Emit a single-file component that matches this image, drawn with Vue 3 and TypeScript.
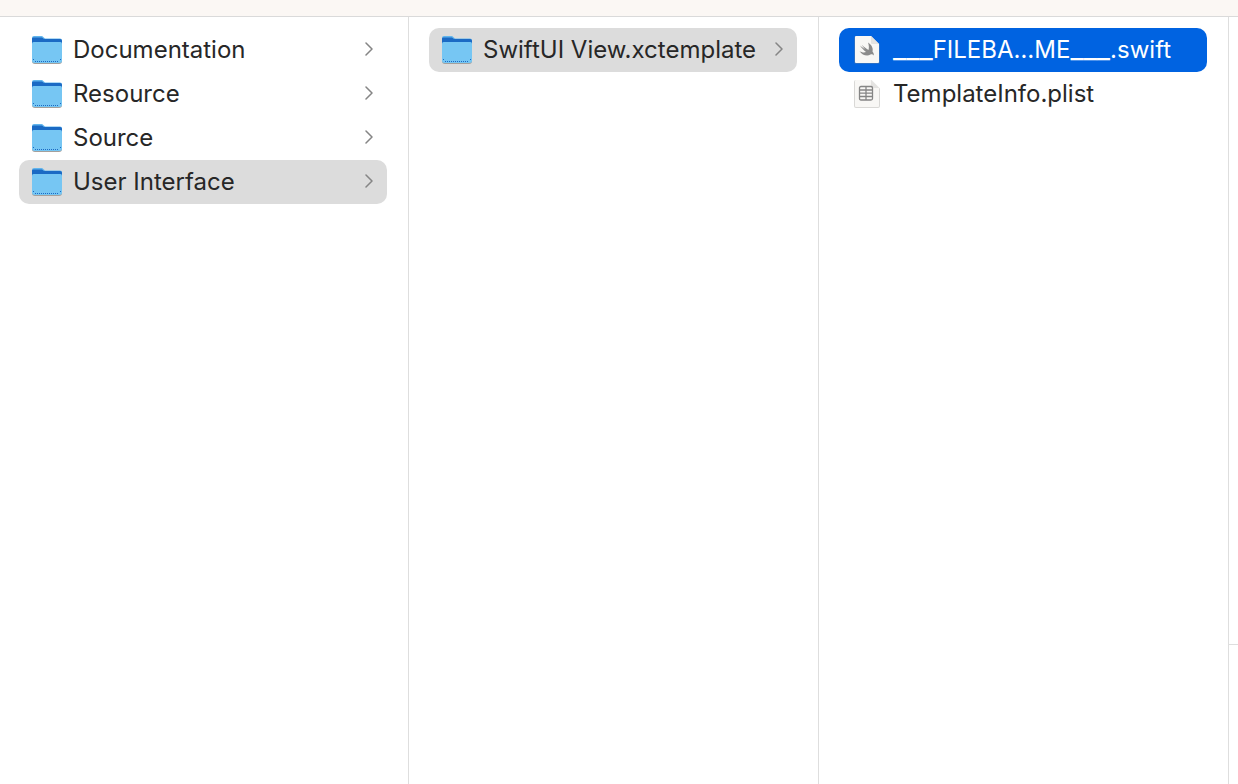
<script setup lang="ts">
import { ref } from 'vue'

type Kind = 'folder' | 'swift' | 'plist'

interface Entry {
  name: string
  kind: Kind
}

interface Column {
  label: string
  entries: Entry[]
}

const columns: Column[] = [
  {
    label: 'Templates',
    entries: [
      { name: 'Documentation', kind: 'folder' },
      { name: 'Resource', kind: 'folder' },
      { name: 'Source', kind: 'folder' },
      { name: 'User Interface', kind: 'folder' },
    ],
  },
  {
    label: 'User Interface',
    entries: [{ name: 'SwiftUI View.xctemplate', kind: 'folder' }],
  },
  {
    label: 'SwiftUI View.xctemplate',
    entries: [
      { name: '___FILEBA…ME___.swift', kind: 'swift' },
      { name: 'TemplateInfo.plist', kind: 'plist' },
    ],
  },
]

const selected = ref<number[]>([3, 0, 0])

function select(column: number, row: number): void {
  selected.value[column] = row
}

// Splits a name so that runs of underscores can be set at a larger size.
function parts(name: string): string[] {
  return name.split(/(_+)/).filter((part) => part !== '')
}
</script>

<template>
  <div class="browser">
    <header class="toolbar"></header>
    <main class="columns">
      <ul v-for="(column, c) in columns" :key="column.label" class="column" :aria-label="column.label">
        <li v-for="(entry, r) in column.entries" :key="entry.name">
          <button
            type="button"
            class="row"
            :class="{ selected: selected[c] === r, active: selected[c] === r && c === columns.length - 1 }"
            :aria-pressed="selected[c] === r"
            @click="select(c, r)"
          >
            <svg v-if="entry.kind === 'folder'" class="icon" viewBox="0 0 32 32" aria-hidden="true">
              <path class="folder-shadow" d="M1 9h30v18q0 3-3 3H4q-3 0-3-3z" />
              <path class="folder-tab" d="M1 12V4q0-2 2-2h7.500q1 0 2 1.200l1 .8q.6.500 1.500.500H29q2 0 2 2V12z" />
              <path class="folder-back" d="M1 12V4.500Q1 3.500 2.500 3.500H11l2 1.500h16q2 0 2 1.800v5z" />
              <path class="folder-front" d="M1 9.500Q1 8 2.500 8h27Q31 8 31 9.500v17q0 2.500-2.500 2.500h-25Q1 29 1 26.500z" />
              <path class="folder-edge" d="M4 27.500h24M2.500 25v1M29.500 25v1" />
            </svg>
            <svg v-else class="icon" viewBox="0 0 32 32" aria-hidden="true">
              <path class="page-shadow" d="M3 4q0-2 2-2h15.500L29 10.500V28q0 2-2 2H5q-2 0-2-2z" />
              <path class="page" d="M4 3q0-1 1-1h15l8 8v18q0 1-1 1H5q-1 0-1-1z" />
              <path class="page-fold" d="M20 2v7q0 1 1 1h7z" />
              <path
                v-if="entry.kind === 'swift'"
                class="bird"
                d="M17 8.500c3.800 2.300 5.400 5.900 4.500 9 1.400 1.600 1.500 3.200 1.100 4-.9-1.400-2.200-1.400-3.100-.9-3.500 1.900-8.500.5-11-3.700 2 1.400 4.500 2 6.500 1.100-2.500-1.800-4.600-4.400-6-6.500 2 1.700 4 3.100 5.300 3.900-1.200-1.300-2.600-3.100-3.500-4.700 2.300 2.300 4.700 4.200 6.700 5.200.8-2.500.3-5-.5-7.400z"
              />
              <path v-else class="grid" d="M10 8.500h10q1.500 0 1.500 1.500v10.500q0 1.500-1.500 1.500H10q-1.500 0-1.500-1.500V10q0-1.500 1.500-1.500zM8.500 12h13M8.500 15.200h13M8.500 18.500h13M15 8.500v13.500" />
            </svg>
            <span class="name"><span
              v-for="(part, p) in parts(entry.name)"
              :key="p"
              :class="{ underscores: part.startsWith('_') }"
            >{{ part }}</span></span>
            <svg v-if="entry.kind === 'folder'" class="chevron" viewBox="0 0 8 14" aria-hidden="true">
              <path d="M1 1l6 6-6 6" />
            </svg>
          </button>
        </li>
      </ul>
      <aside class="preview" aria-label="Preview">
        <div class="thumbnail"></div>
        <div class="details"></div>
      </aside>
    </main>
  </div>
</template>

<style>
body {
  margin: 0;
}
</style>

<style scoped>
.browser {
  display: flex;
  flex-direction: column;
  min-height: 100vh;
  background: #ffffff;
  color: #272727;
  font-family: Inter, "Liberation Sans", sans-serif;
}

.toolbar {
  height: 16px;
  background: #fbf7f4;
  border-bottom: 1px solid #dadada;
}

.columns {
  flex: 1;
  display: grid;
  grid-template-columns: 408fr 410fr 410fr 10fr;
}

.column {
  min-width: 0;
  margin: 0;
  padding: 11px 21px 11px 20px;
  list-style: none;
  border-left: 1px solid #dedede;
}

.column:first-child {
  padding-left: 19px;
  border-left: 0;
}

.row {
  display: flex;
  align-items: center;
  box-sizing: border-box;
  width: 100%;
  height: 44px;
  padding: 0 12px;
  border: 0;
  border-radius: 10px;
  background: transparent;
  color: inherit;
  font: inherit;
  font-size: 24px;
  line-height: 32px;
  text-align: left;
}

.row.selected {
  background: #dcdcdc;
}

.row.active {
  background: #0063e1;
  color: #ffffff;
}

.icon {
  flex: none;
  width: 32px;
  height: 32px;
  margin-right: 10px;
}

.name {
  flex: 1;
  min-width: 0;
  white-space: nowrap;
}

.underscores {
  font-size: 29px;
  line-height: 24px;
}

.chevron {
  flex: none;
  width: 8px;
  height: 14px;
  margin: 0 2px 2px 7px;
  fill: none;
  stroke: #858585;
  stroke-width: 1.5;
  stroke-linecap: round;
  stroke-linejoin: round;
}

.folder-shadow {
  fill: #a5a09c;
}

.folder-tab {
  fill: #62b5ec;
}

.folder-back {
  fill: #1b6ac4;
}

.folder-front {
  fill: #76c6f3;
}

.folder-edge {
  fill: none;
  stroke: #1b6ac4;
  stroke-width: 1;
  stroke-dasharray: 1 1;
}

.page-shadow {
  fill: #d9d8d6;
}

.page {
  fill: #f8f7f5;
}

.page-fold {
  fill: #e4e3e1;
}

.active .page-shadow {
  fill: #2a6fc6;
}

.bird {
  fill: #8b8b8b;
}

.grid {
  fill: none;
  stroke: #858585;
  stroke-width: 1.3;
}

.preview {
  display: grid;
  grid-template-rows: 628fr 139fr;
  border-left: 1px solid #dedede;
}

.thumbnail {
  border-bottom: 1px solid #dedede;
}
</style>
